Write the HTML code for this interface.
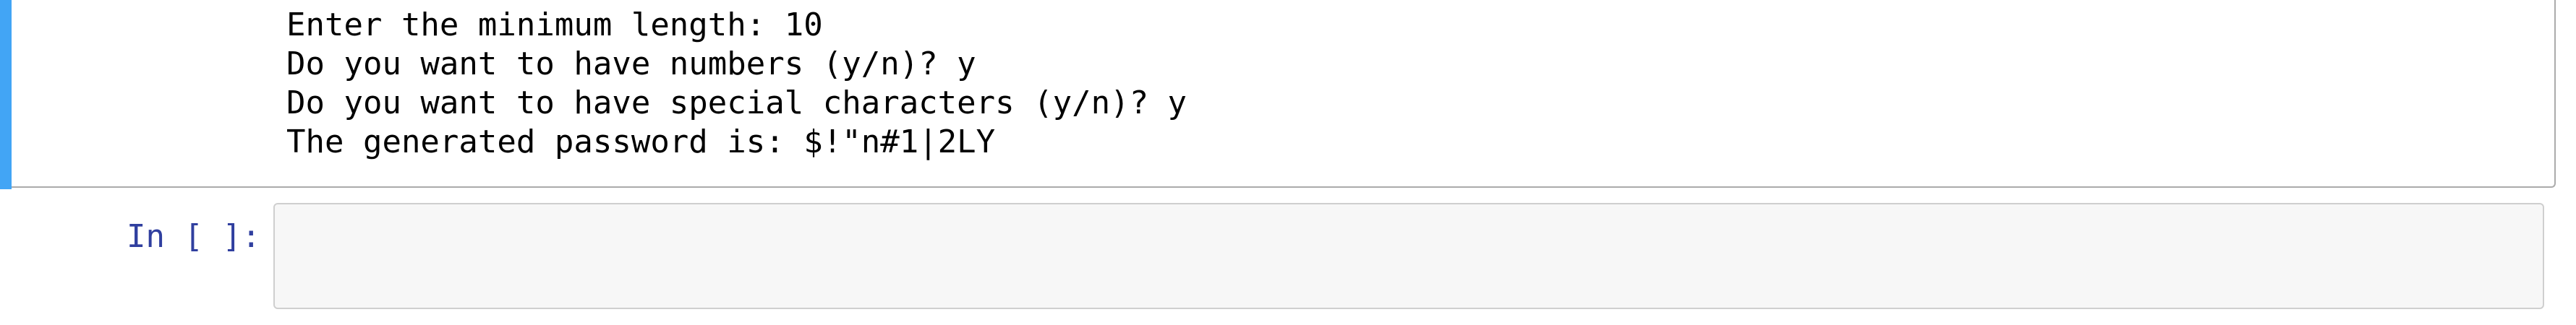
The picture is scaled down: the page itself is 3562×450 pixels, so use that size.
<!DOCTYPE html>
<html><head><meta charset="utf-8"><style>
html,body{margin:0;padding:0;background:#fff;width:3562px;height:450px;overflow:hidden;position:relative}
.bar{position:absolute;left:0;top:0;width:16px;height:262px;background:#42a5f5}
.cell{position:absolute;left:16px;top:-4px;width:3516px;height:262px;border:2px solid #ababab;border-left:none;border-top:none;border-bottom-right-radius:6px;box-sizing:content-box}
pre{position:absolute;left:396px;top:8px;margin:0;font-family:"DejaVu Sans Mono","Liberation Mono",monospace;font-size:44px;line-height:54px;color:#000}
.prompt{position:absolute;left:175px;top:301px;font-family:"DejaVu Sans Mono","Liberation Mono",monospace;font-size:44px;line-height:54px;color:#303f9f}
.inp{position:absolute;left:378px;top:281px;width:3136px;height:143px;background:#f7f7f7;border:2px solid #cfcfcf;border-radius:6px}
</style></head><body>
<div class="bar"></div>
<div class="cell"></div>
<pre>Enter the minimum length: 10
Do you want to have numbers (y/n)? y
Do you want to have special characters (y/n)? y
The generated password is: $!"n#1|2LY</pre>
<div class="prompt">In [ ]:</div>
<div class="inp"></div>
</body></html>
